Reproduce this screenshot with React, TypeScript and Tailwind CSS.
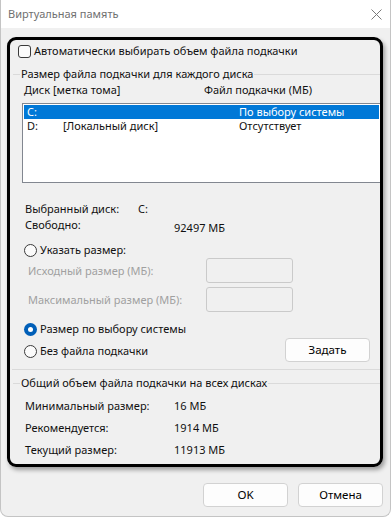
const font = "font-['Noto_Sans',sans-serif]";

function Radio({ checked }: { checked?: boolean }) {
  if (checked) {
    return (
      <span className="flex h-[13px] w-[13px] shrink-0 items-center justify-center rounded-full bg-[#005fb8]">
        <span className="h-[5px] w-[5px] rounded-full bg-white" />
      </span>
    );
  }
  return <span className="h-[13px] w-[13px] shrink-0 rounded-full border border-[#3a3a3a] bg-[#fbfbfb]" />;
}

function GroupTitle({ children }: { children: string }) {
  return (
    <div className="flex h-[14px] items-center">
      <div className="h-px w-[7px] bg-[#dadada]" />
      <span className="px-px">{children}</span>
      <div className="h-px flex-1 bg-[#dadada]" />
    </div>
  );
}

function InfoRow({ label, value }: { label: string; value: string }) {
  return (
    <div className="flex h-[14px] items-center pl-[15px]">
      <span className="w-[149px]">{label}</span>
      <span>{value}</span>
    </div>
  );
}

function WinButton({ children, className = "" }: { children: string; className?: string }) {
  return (
    <button className={`h-[24px] w-[85px] rounded-[4px] border border-[#d2d2d2] bg-[#fdfdfd] text-[11.5px] text-black ${className}`}>
      {children}
    </button>
  );
}

export default function App() {
  return (
    <div className={`h-[520px] w-[391px] bg-white text-[11px] leading-[14px] text-[#111] ${font}`}>
      <div className="flex h-[517px] flex-col overflow-hidden rounded-b-[8px] border-x border-b border-[#c4c4c4] bg-[#f0f0f0]">
        {/* Title bar */}
        <div className="flex h-[28px] shrink-0 items-center justify-between bg-white pl-[7px] pr-[7px]">
          <span className="text-[11px] text-[#707070]">Виртуальная память</span>
          <svg width="11" height="11" viewBox="0 0 11 11" className="mr-[1px]">
            <path d="M0.5 0.5 L10.5 10.5 M10.5 0.5 L0.5 10.5" stroke="#7a7a7a" strokeWidth="1" />
          </svg>
        </div>

        {/* Highlighted content */}
        <div className="ml-[6px] mt-[9px] h-[430px] w-[376px] rounded-[9px] border-[3px] border-black shadow-[2px_3px_4px_rgba(0,0,0,0.35)]">
          <div className="flex flex-col pt-[4px]">
            <label className="flex h-[14px] items-center gap-[3px] pl-[8px]">
              <span className="h-[13px] w-[13px] rounded-[3px] border border-[#3a3a3a] bg-[#fbfbfb]" />
              <span>Автоматически выбирать объем файла подкачки</span>
            </label>

            <div className="mt-[9px] pl-[3px]">
              <GroupTitle>Размер файла подкачки для каждого диска</GroupTitle>
            </div>

            <div className="mt-[2px] flex h-[14px] items-center pl-[14px]">
              <span className="w-[180px]">Диск [метка тома]</span>
              <span>Файл подкачки (МБ)</span>
            </div>

            <div className="ml-[12px] mt-[6px] h-[80px] border border-r-0 border-[#828790] bg-white p-px">
              <div className="flex h-[14px] items-center bg-[#0078d7] pl-[3px] text-white">
                <span className="w-[212px]">C:</span>
                <span>По выбору системы</span>
              </div>
              <div className="flex h-[14px] items-center pl-[3px]">
                <span className="w-[36px]">D:</span>
                <span className="w-[176px]">[Локальный диск]</span>
                <span>Отсутствует</span>
              </div>
            </div>

            <div className="mt-[19px] flex h-[14px] items-center pl-[15px]">
              <span className="w-[113px]">Выбранный диск:</span>
              <span>C:</span>
            </div>
            <div className="mt-[2px] flex h-[14px] pl-[15px]">
              <span className="w-[149px]">Свободно:</span>
              <span className="mt-[3px]">92497 МБ</span>
            </div>

            <label className="mt-[11px] flex h-[14px] items-center gap-[3px] pl-[14px]">
              <Radio />
              <span>Указать размер:</span>
            </label>

            <div className="mt-[1px] flex h-[25px] items-center pl-[18px]">
              <span className="w-[178px] text-[#a0a0a0]">Исходный размер (МБ):</span>
              <div className="h-[25px] w-[87px] rounded-[3px] border border-[#cacaca] bg-[#f0f0f0]" />
            </div>
            <div className="mt-[4px] flex h-[25px] items-center pl-[18px]">
              <span className="w-[178px] text-[#a0a0a0]">Максимальный размер (МБ):</span>
              <div className="h-[25px] w-[87px] rounded-[3px] border border-[#cacaca] bg-[#f0f0f0]" />
            </div>

            <label className="mt-[10px] flex h-[14px] items-center gap-[3px] pl-[14px]">
              <Radio checked />
              <span>Размер по выбору системы</span>
            </label>

            <div className="mt-[2px] flex h-[23px] items-center pl-[14px] pr-[10px]">
              <label className="mt-[3px] flex flex-1 items-center gap-[3px]">
                <Radio />
                <span>Без файла подкачки</span>
              </label>
              <WinButton className="h-[23px]">Задать</WinButton>
            </div>

            <div className="mt-[8px] ml-[2px] h-px bg-[#dadada]" />

            <div className="mt-[6px] pl-[3px]">
              <GroupTitle>Общий объем файла подкачки на всех дисках</GroupTitle>
            </div>

            <div className="mt-[9px] flex flex-col gap-[8px]">
              <InfoRow label="Минимальный размер:" value="16 МБ" />
              <InfoRow label="Рекомендуется:" value="1914 МБ" />
              <InfoRow label="Текущий размер:" value="11913 МБ" />
            </div>
          </div>
        </div>

        {/* Dialog buttons */}
        <div className="mt-[16px] flex justify-end gap-[10px] pr-[7px]">
          <WinButton>OK</WinButton>
          <WinButton>Отмена</WinButton>
        </div>
      </div>
    </div>
  );
}
